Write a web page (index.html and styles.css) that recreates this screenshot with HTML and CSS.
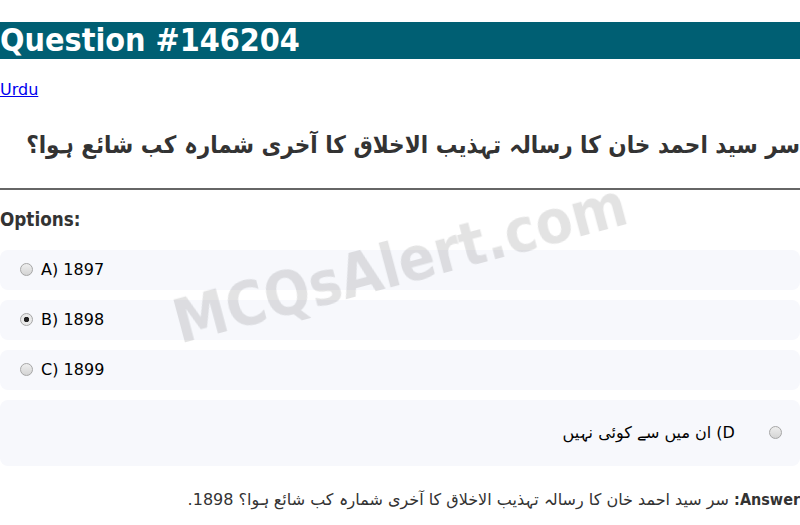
FILE: index.html
```html
<!DOCTYPE html>
<html lang="ur">
<head>
<meta charset="utf-8">
<title>Question #146204</title>
<link rel="stylesheet" href="styles.css">
</head>
<body>
<h1 class="title">Question #146204</h1>
<p class="lang"><a class="lang-link" href="#">Urdu</a></p>
<h2 class="question" dir="rtl">سر سید احمد خان کا رسالہ تہذیب الاخلاق کا آخری شمارہ کب شائع ہوا؟</h2>
<hr class="rule">
<h3 class="options-title">Options:</h3>
<div class="options">
  <label class="option"><input class="radio" type="radio" name="opt"> A) 1897</label>
  <label class="option"><input class="radio" type="radio" name="opt" checked> B) 1898</label>
  <label class="option"><input class="radio" type="radio" name="opt"> C) 1899</label>
  <label class="option option-rtl" dir="rtl"><input class="radio" type="radio" name="opt"> D) ان میں سے کوئی نہیں</label>
</div>
<p class="answer" dir="rtl"><strong class="answer-label">Answer:</strong> سر سید احمد خان کا رسالہ تہذیب الاخلاق کا آخری شمارہ کب شائع ہوا؟ 1898.</p>
<div class="watermark">MCQsAlert.com</div>
</body>
</html>
```
FILE: styles.css
```css
body {
  margin: 0;
  font-family: "DejaVu Sans", sans-serif;
  font-size: 16px;
  color: #333;
  background: #fff;
}

.title,
.question,
.options-title,
.answer-label,
.watermark {
  font-family: "DejaVu Sans Condensed", "DejaVu Sans", sans-serif;
  font-stretch: condensed;
  font-weight: bold;
}

.title {
  margin: 22px 0 21px;
  font-size: 32px;
  line-height: 37px;
  background: #005f73;
  color: #fff;
}

.lang {
  margin: 0;
  line-height: 20px;
}

.lang-link {
  color: #0000ee;
}

.question {
  font-size: 24px;
  line-height: 50px;
  color: #333;
  margin: 20px 0 18px;
}

.rule {
  border: 0;
  border-top: 2px solid #666;
  margin: 0;
}

.options-title {
  font-size: 18.72px;
  line-height: 22px;
  margin: 19px 0 19px;
  color: #333;
}

.options {
  display: flex;
  flex-direction: column;
  gap: 10px;
}

.option {
  display: block;
  background: #f7f8fc;
  border-radius: 8px;
  padding: 10px 15px;
  line-height: 20px;
  color: #000;
}

.option-rtl {
  line-height: 46px;
}

.radio {
  appearance: none;
  -webkit-appearance: none;
  box-sizing: border-box;
  width: 13px;
  height: 13px;
  margin: 3px 3px 0 5px;
  border-radius: 50%;
  border: 1px solid #a6a6a6;
  background: linear-gradient(#eeeeee, #d4d4d4);
  vertical-align: -1px;
}

.radio:checked {
  background: radial-gradient(circle, #222 0 2.4px, #e9e9e9 3px);
}

.option-rtl .radio {
  margin-left: 29px;
}

.answer {
  margin: 16px 0;
  line-height: 36px;
}

.watermark {
  position: fixed;
  top: 50%;
  left: 50%;
  transform: translate(-50%, -50%) rotate(-15deg);
  font-size: 60px;
  color: rgba(0, 0, 0, 0.11);
  white-space: nowrap;
  pointer-events: none;
  z-index: 10;
}
```
